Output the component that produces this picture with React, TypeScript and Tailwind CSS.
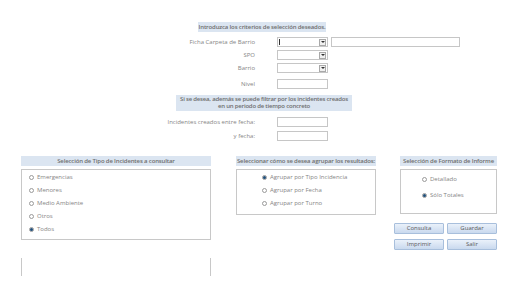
const font = { fontFamily: '"Open Sans", "Liberation Sans", sans-serif' };

function Combo({ cursor }: { cursor?: boolean }) {
  return (
    <div className="flex h-[10px] w-[51px] items-center border border-[#c6c6c6] bg-white">
      <div className="flex-1 h-full">
        {cursor && <div className="ml-[1px] mt-[1px] h-[6px] w-px bg-[#333]" />}
      </div>
      <div className="mr-[1px] flex h-[7px] w-[7px] items-center justify-center border border-[#a9a9a9] bg-[#f0f0f0]">
        <div className="h-0 w-0 border-x-[2px] border-t-[2px] border-x-transparent border-t-[#333]" />
      </div>
    </div>
  );
}

function Box({ w = "w-[51px]" }: { w?: string }) {
  return <div className={`h-[10px] ${w} border border-[#c6c6c6] bg-white`} />;
}

function Row({ label, children, mt }: { label: string; children: React.ReactNode; mt: string }) {
  return (
    <div className={`flex items-center ${mt}`}>
      <div className="w-[255px] text-right text-[6px] leading-[10px] text-[#858585]">{label}</div>
      <div className="ml-[22px] flex items-center gap-[3px]">{children}</div>
    </div>
  );
}

function Radio({ label, on }: { label: string; on?: boolean }) {
  return (
    <div className="flex h-[13px] items-center gap-[3px] whitespace-nowrap text-[6px] text-[#858585]">
      <span className="flex h-[5px] w-[5px] shrink-0 items-center justify-center rounded-full border border-[#9a9a9a] bg-white">
        {on && <span className="h-[3px] w-[3px] rounded-full bg-[#1f4e79]" />}
      </span>
      {label}
    </div>
  );
}

function Header({ text }: { text: string }) {
  return (
    <div className="flex h-[10px] w-full items-center justify-center overflow-visible whitespace-nowrap bg-[#dbe5f1] text-[6px] font-semibold tracking-[-0.15px] text-[#6e6e6e]">
      {text}
    </div>
  );
}

function Btn({ label }: { label: string }) {
  return (
    <div className="flex h-[11px] w-[50px] items-center justify-center rounded-[1px] border border-[#a8bfdc] bg-gradient-to-b from-[#eaf1fa] to-[#c9d9ee] text-[6px] text-[#5a5a5a]">
      {label}
    </div>
  );
}

export default function App() {
  return (
    <div className="h-[287px] w-[519px] overflow-hidden bg-white" style={font}>
      <div className="pt-[22px]">
        <div className="ml-[198px] flex h-[10px] w-[128px] items-center justify-center whitespace-nowrap bg-[#dbe5f1] text-[6px] font-semibold tracking-[-0.15px] text-[#6e6e6e]">
          Introduzca los criterios de selección deseados.
        </div>
        <Row label="Ficha Carpeta de Barrio" mt="mt-[5px]">
          <Combo cursor />
          <Box w="w-[129px]" />
        </Row>
        <Row label="SPO" mt="mt-[3px]">
          <Combo />
        </Row>
        <Row label="Barrio" mt="mt-[3px]">
          <Combo />
        </Row>
        <Row label="Nivel" mt="mt-[6px]">
          <Box />
        </Row>
        <div className="ml-[176px] mt-[6px] flex h-[16px] w-[176px] flex-col items-center justify-center whitespace-nowrap bg-[#dbe5f1] text-[6px] font-semibold leading-[7px] tracking-[-0.2px] text-[#6e6e6e]">
          <span>Si se desea, además se puede filtrar por los incidentes creados</span>
          <span>en un periodo de tiempo concreto</span>
        </div>
        <Row label="Incidentes creados entre fecha:" mt="mt-[6px]">
          <Box />
        </Row>
        <Row label="y fecha:" mt="mt-[4px]">
          <Box />
        </Row>
      </div>

      <div className="ml-[21px] mt-[15px] flex items-start">
        <div className="w-[190px] shrink-0">
          <Header text="Selección de Tipo de Incidentes a consultar" />
          <div className="mt-[3px] h-[71px] border border-[#c8c8c8] pl-[7px] pt-[1px]">
            <Radio label="Emergencias" />
            <Radio label="Menores" />
            <Radio label="Medio Ambiente" />
            <Radio label="Otros" />
            <Radio label="Todos" on />
          </div>
          <div className="mt-[18px] h-[18px] border-x border-[#c8c8c8]" />
        </div>
        <div className="ml-[25px] w-[140px] shrink-0">
          <Header text="Seleccionar cómo se desea agrupar los resultados:" />
          <div className="mt-[3px] h-[46px] border border-[#c8c8c8] pl-[25px] pt-[1px]">
            <Radio label="Agrupar por Tipo Incidencia" on />
            <Radio label="Agrupar por Fecha" />
            <Radio label="Agrupar por Turno" />
          </div>
        </div>
        <div className="ml-[24px] w-[97px] shrink-0">
          <Header text="Selección de Formato de Informe" />
          <div className="mt-[3px] flex h-[45px] flex-col gap-[3px] border border-[#c8c8c8] pl-[21px] pt-[3px]">
            <Radio label="Detallado" />
            <Radio label="Sólo Totales" on />
          </div>
          <div className="ml-[-6px] mt-[9px] grid w-[103px] grid-cols-2 gap-x-[3px] gap-y-[5px]">
            <Btn label="Consulta" />
            <Btn label="Guardar" />
            <Btn label="Imprimir" />
            <Btn label="Salir" />
          </div>
        </div>
      </div>
    </div>
  );
}
